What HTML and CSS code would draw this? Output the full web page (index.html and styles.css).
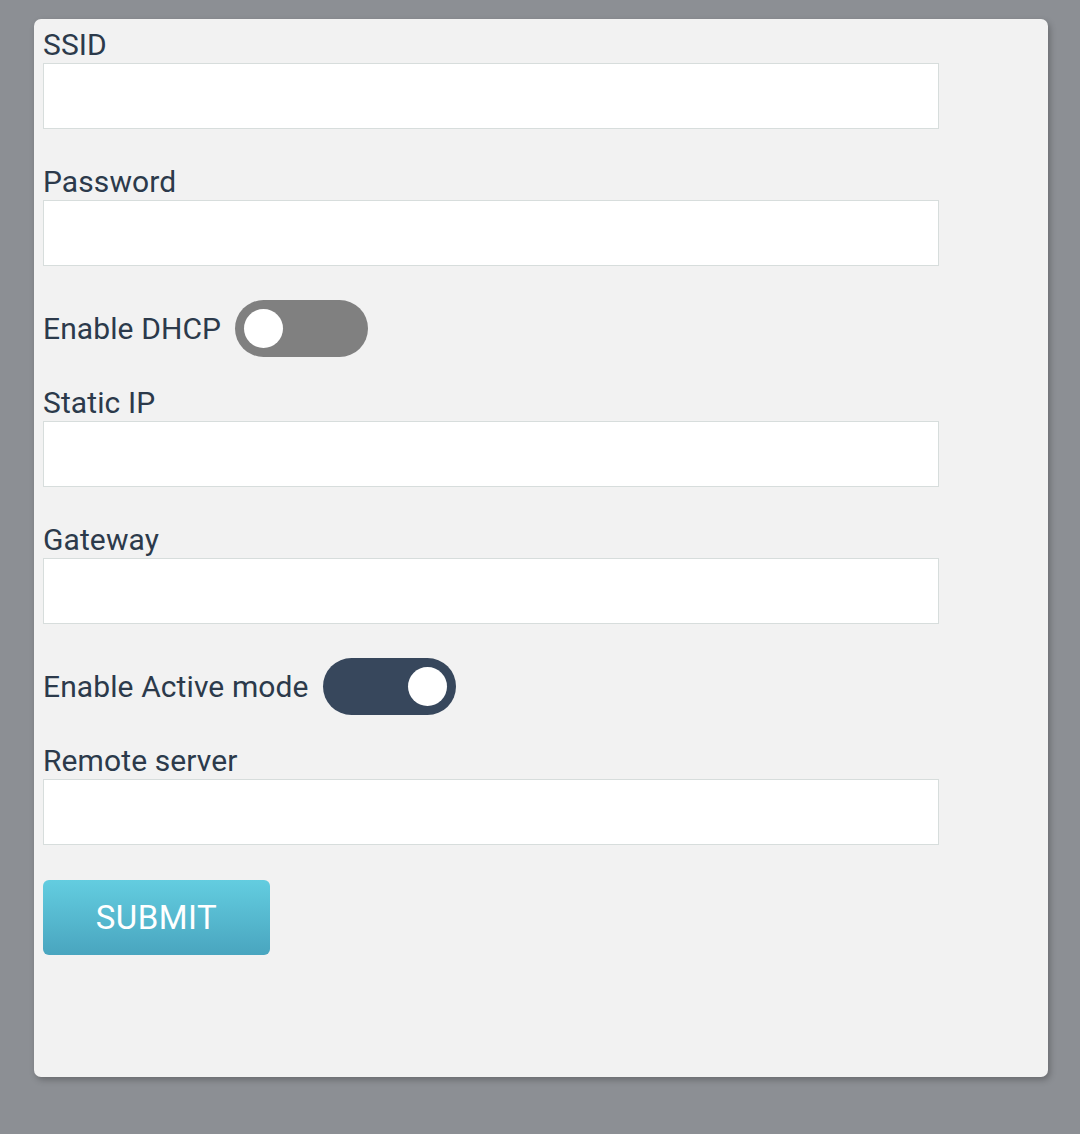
FILE: index.html
```html
<!DOCTYPE html>
<html>
<head>
<meta charset="utf-8">
<link rel="stylesheet" href="styles.css">
</head>
<body>
<div class="card">
  <form class="form">
    <label class="label">SSID</label>
    <input class="input" type="text">
    <label class="label">Password</label>
    <input class="input" type="password">
    <div class="toggle-row">
      <span class="toggle-text">Enable DHCP</span>
      <span class="switch"><span class="knob"></span></span>
    </div>
    <label class="label">Static IP</label>
    <input class="input" type="text">
    <label class="label">Gateway</label>
    <input class="input" type="text">
    <div class="toggle-row">
      <span class="toggle-text">Enable Active mode</span>
      <span class="switch on"><span class="knob"></span></span>
    </div>
    <label class="label">Remote server</label>
    <input class="input" type="text">
    <button class="submit" type="button">SUBMIT</button>
  </form>
</div>
</body>
</html>
```

FILE: styles.css
```css
html, body {
  margin: 0;
  padding: 0;
  background: #8c8f94;
  font-family: Roboto, "Liberation Sans", sans-serif;
}
body {
  padding: 19px 32px 57px 34px;
  height: 1134px;
  box-sizing: border-box;
}
.card {
  background: #f2f2f2;
  border-radius: 7px;
  box-shadow: 2px 3px 6px rgba(0, 0, 0, 0.25);
  height: 1058px;
  box-sizing: border-box;
  padding: 8px 9px;
}
.form {
  display: flex;
  flex-direction: column;
  align-items: flex-start;
}
.label {
  display: block;
  font-size: 30px;
  letter-spacing: 0.1px;
  line-height: 36px;
  height: 36px;
  color: #2c3a4b;
}
.input {
  display: block;
  width: 896px;
  height: 66px;
  box-sizing: border-box;
  border: 1px solid #d7dddc;
  background: #ffffff;
  margin: 0 0 34.5px 0;
  padding: 0 10px;
  font-size: 28px;
  outline: none;
}
.toggle-row {
  display: flex;
  align-items: center;
  height: 57px;
  margin-bottom: 28px;
  gap: 14px;
}
.toggle-text {
  font-size: 30px;
  letter-spacing: 0.1px;
  color: #2c3a4b;
  line-height: 36px;
}
.switch {
  position: relative;
  width: 133px;
  height: 57px;
  border-radius: 29px;
  background: #808080;
  display: block;
}
.switch .knob {
  position: absolute;
  left: 9px;
  top: 9px;
  width: 39px;
  height: 39px;
  border-radius: 50%;
  background: #ffffff;
}
.switch.on {
  background: #37475c;
}
.switch.on .knob {
  left: auto;
  right: 9px;
}
.submit {
  margin-top: 0;
  width: 227px;
  height: 75px;
  border: none;
  border-radius: 6px;
  background: linear-gradient(to bottom, #63cde0, #49a5bf);
  color: #ffffff;
  font-family: Roboto, "Liberation Sans", sans-serif;
  font-size: 33px;
  letter-spacing: 0.5px;
  padding: 0;
}
```
